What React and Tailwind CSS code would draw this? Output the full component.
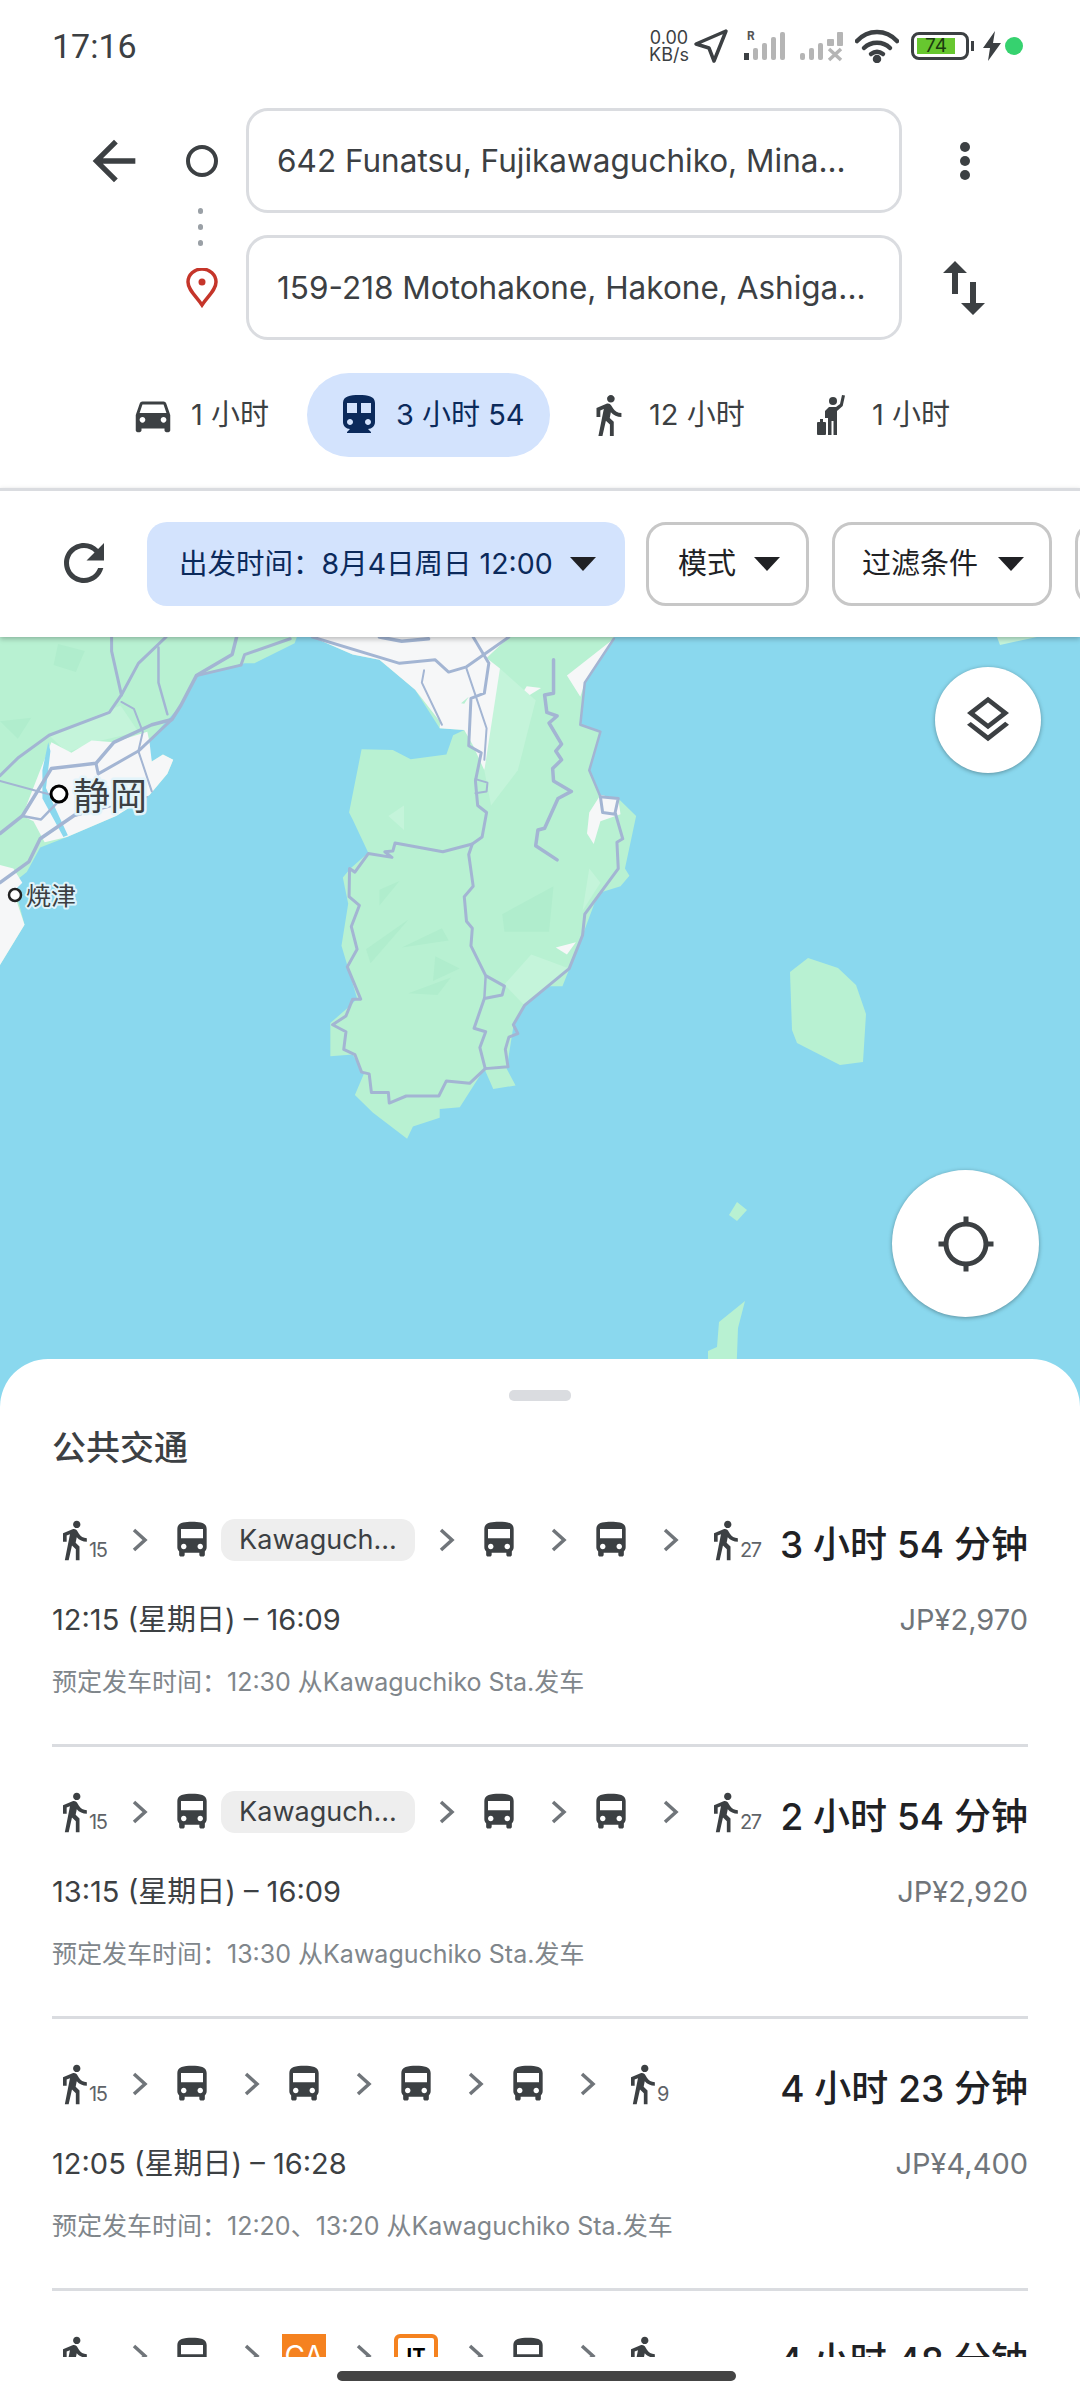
const WALK = 'M13.5 5.5c1.1 0 2-.9 2-2s-.9-2-2-2-2 .9-2 2 .9 2 2 2zM9.8 8.9L7 23h2.1l1.8-8 2.1 2v6h2v-7.5l-2.1-2 .6-3C14.8 12 16.8 13 19 13v-2c-1.9 0-3.5-1-4.3-2.4l-1-1.6c-.4-.6-1-1-1.7-1-.3 0-.5.1-.8.1L6 8.3V13h2V9.6l1.8-.7'
const BUS = 'M4 16c0 .88.39 1.67 1 2.22V20c0 .55.45 1 1 1h1c.55 0 1-.45 1-1v-1h8v1c0 .55.45 1 1 1h1c.55 0 1-.45 1-1v-1.78c.61-.55 1-1.34 1-2.22V6c0-3.5-3.58-4-8-4s-8 .5-8 4v10zm3.5 1c-.83 0-1.5-.67-1.5-1.5S6.67 14 7.5 14s1.5.67 1.5 1.5S8.33 17 7.5 17zm9 0c-.83 0-1.5-.67-1.5-1.5s.67-1.5 1.5-1.5 1.5.67 1.5 1.5-.67 1.5-1.5 1.5zm1.5-6H6V6h12v5z'
const CAR = 'M18.92 6.01C18.72 5.42 18.16 5 17.5 5h-11c-.66 0-1.21.42-1.42 1.01L3 12v8c0 .55.45 1 1 1h1c.55 0 1-.45 1-1v-1h12v1c0 .55.45 1 1 1h1c.55 0 1-.45 1-1v-8l-2.08-5.99zM6.5 16c-.83 0-1.5-.67-1.5-1.5S5.67 13 6.5 13s1.5.67 1.5 1.5S7.33 16 6.5 16zm11 0c-.83 0-1.5-.67-1.5-1.5s.67-1.5 1.5-1.5 1.5.67 1.5 1.5-.67 1.5-1.5 1.5zM5 11l1.5-4.5h11L19 11H5z'
const TRAIN = 'M12 2c-4.42 0-8 .5-8 4v9.5C4 17.43 5.57 19 7.5 19L6 20.5v.5h12v-.5L16.5 19c1.93 0 3.5-1.57 3.5-3.5V6c0-3.5-3.58-4-8-4zM7.5 17c-.83 0-1.5-.67-1.5-1.5S6.67 14 7.5 14s1.5.67 1.5 1.5S8.33 17 7.5 17zm3.5-6H6V6h5v5zm5.5 6c-.83 0-1.5-.67-1.5-1.5s.67-1.5 1.5-1.5 1.5.67 1.5 1.5-.67 1.5-1.5 1.5zM18 11h-5V6h5v5z'
const REFRESH = 'M17.65 6.35C16.2 4.9 14.21 4 12 4c-4.42 0-7.99 3.58-7.99 8s3.57 8 7.99 8c3.73 0 6.84-2.55 7.73-6h-2.08c-.82 2.33-3.04 4-5.65 4-3.31 0-6-2.69-6-6s2.69-6 6-6c1.66 0 3.14.69 4.22 1.78L13 11h7V4l-2.35 2.35z'
const LAYERS = 'M11.99 18.54l-7.37-5.73L3 14.07l9 7 9-7-1.63-1.27-7.38 5.74zM12 16l7.36-5.73L21 9l-9-7-9 7 1.63 1.27L12 16zm0-11.47L17.74 9 12 13.47 6.26 9 12 4.53z'
const LOCATE = 'M20.94 11c-.46-4.17-3.77-7.48-7.94-7.94V1h-2v2.06C6.83 3.52 3.52 6.83 3.06 11H1v2h2.06c.46 4.17 3.77 7.48 7.94 7.94V23h2v-2.06c4.17-.46 7.48-3.77 7.94-7.94H23v-2h-2.06zM12 19c-3.87 0-7-3.13-7-7s3.13-7 7-7 7 3.13 7 7-3.13 7-7 7z'
const SWAP = 'M16 17.01V10h-2v7.01h-3L15 21l4-3.99h-3zM9 3L5 6.99h3V14h2V6.99h3L9 3z'
const BACK = 'M20 11H7.83l5.59-5.59L12 4l-8 8 8 8 1.41-1.41L7.83 13H20v-2z'

function Icon({ d, className }) {
  return (
    <svg viewBox="0 0 24 24" className={className} fill="currentColor">
      <path d={d} />
    </svg>
  )
}

function HailIcon() {
  return (
    <svg viewBox="0 0 32 42" className="w-[32px] h-[42px] text-[#3c4043]" fill="currentColor">
      <circle cx="17" cy="7" r="4" />
      <path d="M13 13h7l4-3 2-9 3 .6-2.300 10.400-5.700 5V41h-3.500V27h-2v14H12V24l-3 0V17z" />
      <rect x="1" y="28" width="9" height="13" rx="1" />
      <rect x="4" y="25" width="3" height="3" />
    </svg>
  )
}

function Chevron() {
  return (
    <svg viewBox="0 0 44 44" className="w-[44px] h-[44px] shrink-0" fill="none" stroke="#70757a" strokeWidth="3.500">
      <path d="M16 12l11 10-11 10" />
    </svg>
  )
}

function Bus() {
  return <Icon d={BUS} className="w-[44px] h-[44px] shrink-0 text-[#3c4043]" />
}

function Walk({ minutes }) {
  return (
    <div className="flex items-end shrink-0">
      <Icon d={WALK} className="w-[44px] h-[44px] text-[#3c4043]" />
      <span className="-ml-[7px] w-[19px] text-[20px] leading-[24px] tracking-[-1.5px] text-[#5f6368]">{minutes}</span>
    </div>
  )
}

function RouteIcons({ steps }) {
  return (
    <div className="flex items-center">
      {steps.map((s, i) => {
        const prev = steps[i - 1]
        const wide = prev && prev.type !== 'walk' && !prev.label
        return (
          <div key={i} className="flex items-center">
            {i > 0 && <div className={wide ? 'ml-[16px]' : 'ml-[10px]'}><Chevron /></div>}
            {s.type === 'walk' && <div className="ml-[10px]"><Walk minutes={s.min} /></div>}
            {s.type === 'bus' && <div className="ml-[8px] flex items-center">
              <Bus />
              {s.label && (
                <span className="ml-[7px] w-[194px] h-[42px] rounded-[14px] bg-[#eeeeee] text-[#3c4043] text-[27px] leading-[42px] text-center">{s.label}</span>
              )}
            </div>}
            {s.type === 'ca' && <div className="ml-[8px] w-[44px] h-[44px] bg-[#f58220] text-white text-[28px] leading-[44px] text-center">CA</div>}
            {s.type === 'it' && <div className="ml-[8px] w-[44px] h-[44px] rounded-t-[6px] border-[4px] border-[#f58220] bg-white text-black text-[20px] leading-[36px] text-center font-bold">IT</div>}
          </div>
        )
      })}
    </div>
  )
}

const routes = [
  {
    steps: [{ type: 'walk', min: 15 }, { type: 'bus', label: 'Kawaguch...' }, { type: 'bus' }, { type: 'bus' }, { type: 'walk', min: 27 }],
    duration: '3 小时 54 分钟', times: '12:15 (星期日) – 16:09', price: 'JP¥2,970',
    note: '预定发车时间：12:30 从Kawaguchiko Sta.发车',
  },
  {
    steps: [{ type: 'walk', min: 15 }, { type: 'bus', label: 'Kawaguch...' }, { type: 'bus' }, { type: 'bus' }, { type: 'walk', min: 27 }],
    duration: '2 小时 54 分钟', times: '13:15 (星期日) – 16:09', price: 'JP¥2,920',
    note: '预定发车时间：13:30 从Kawaguchiko Sta.发车',
  },
  {
    steps: [{ type: 'walk', min: 15 }, { type: 'bus' }, { type: 'bus' }, { type: 'bus' }, { type: 'bus' }, { type: 'walk', min: 9 }],
    duration: '4 小时 23 分钟', times: '12:05 (星期日) – 16:28', price: 'JP¥4,400',
    note: '预定发车时间：12:20、13:20 从Kawaguchiko Sta.发车',
  },
  {
    steps: [{ type: 'walk', min: 15 }, { type: 'bus' }, { type: 'ca' }, { type: 'it' }, { type: 'bus' }, { type: 'walk', min: 9 }],
    duration: '4 小时 48 分钟', times: '12:05 (星期日) – 16:53', price: 'JP¥4,400',
    note: '预定发车时间：12:20 从Kawaguchiko Sta.发车',
  },
]

function RouteRow({ route, last }) {
  return (
    <div className={`mx-[52px] h-[272px] pt-[42px] ${last ? '' : 'border-b-[3px] border-[#dadce0]'}`}>
      <div className="h-[46px] flex items-center justify-between -ml-[10px]">
        <RouteIcons steps={route.steps} />
        <span className="pt-[10px] text-[37px] leading-[46px] font-medium text-[#202124] whitespace-nowrap">{route.duration}</span>
      </div>
      <div className="mt-[37px] h-[40px] flex items-center justify-between text-[29px]">
        <span className="text-[#3c4043]">{route.times}</span>
        <span className="text-[#70757a]">{route.price}</span>
      </div>
      <div className="mt-[26px] h-[34px] flex items-center text-[25px] text-[#80868b]">{route.note}</div>
    </div>
  )
}

function StatusBar() {
  return (
    <div className="h-[92px] flex items-center pl-[52px] text-[#3c4043]">
      <span className="font-['Roboto',sans-serif] text-[34px] leading-none">17:16</span>
      <div className="ml-auto flex items-center pr-[57px]">
        <div className="w-[44px] text-[18px] leading-[17px] text-center">0.00<br />KB/s</div>
        <svg viewBox="0 0 36 36" className="ml-[2px] w-[36px] h-[36px]" fill="none" stroke="#3c4043" strokeWidth="3.500" strokeLinejoin="round">
          <path d="M33 3L3 16l13 4 5 13z" />
        </svg>
        <svg viewBox="0 0 46 34" className="ml-[14px] w-[46px] h-[34px]" fill="#b5b5b5">
          <text x="4" y="11" fontSize="12" fontWeight="700" fill="#555" fontFamily="Roboto, sans-serif">R</text>
          <rect x="1" y="24" width="5" height="7" fill="#3c4043" />
          <rect x="10" y="19" width="5" height="12" rx="2" />
          <rect x="19" y="14" width="5" height="17" rx="2" />
          <rect x="28" y="8" width="5" height="23" rx="2" />
          <rect x="37" y="3" width="5" height="28" rx="2" />
        </svg>
        <svg viewBox="0 0 46 34" className="ml-[10px] w-[46px] h-[34px]" fill="#b5b5b5">
          <rect x="1" y="24" width="5" height="7" rx="2" />
          <rect x="10" y="19" width="5" height="12" rx="2" />
          <rect x="19" y="14" width="5" height="17" rx="2" />
          <rect x="28" y="10" width="7" height="7" rx="1" />
          <rect x="38" y="3" width="6" height="14" rx="1" />
          <path d="M30 20l12 11M42 20L30 31" stroke="#b5b5b5" strokeWidth="3.500" fill="none" />
        </svg>
        <svg viewBox="0 0 44 34" className="ml-[10px] w-[44px] h-[34px]" fill="none" stroke="#3c4043" strokeWidth="4.500" strokeLinecap="round">
          <path d="M2 12C13 0 31 0 42 12" />
          <path d="M9 19c7-7 19-7 26 0" />
          <path d="M16 25c4-3 8-3 12 0" />
          <circle cx="22" cy="30" r="2" fill="#3c4043" />
        </svg>
        <div className="ml-[12px] flex items-center">
          <div className="w-[58px] h-[28px] rounded-[8px] border-[3px] border-[#3c4043] p-[3px]">
            <div className="w-[38px] h-full bg-[#67c72f] text-[19px] leading-[16px] text-center text-[#1b3a10]">74</div>
          </div>
          <div className="ml-[2px] w-[3px] h-[10px] bg-[#3c4043]" />
        </div>
        <svg viewBox="0 0 18 30" className="ml-[9px] w-[18px] h-[30px]" fill="#3c4043">
          <path d="M12 0L0 17h7L5 30 18 12h-8z" />
        </svg>
        <div className="ml-[4px] w-[18px] h-[18px] rounded-full bg-[#36d26f]" />
      </div>
    </div>
  )
}

function SearchBox({ text }) {
  return (
    <div className="h-[105px] rounded-[22px] border-[3px] border-[#dadce0] pl-[28px] flex items-center text-[31.500px] text-[#3c4043] whitespace-nowrap">
      {text}
    </div>
  )
}

function Directions() {
  return (
    <div className="pt-[16px] grid grid-cols-[246px_656px_178px]">
      <div className="row-span-2 h-[232px] relative text-[#3c4043]">
        <div className="absolute left-[82px] top-[21px]"><Icon d={BACK} className="w-[64px] h-[64px]" /></div>
        <div className="absolute left-[186px] top-[37px] w-[32px] h-[32px] rounded-full border-[4px] border-[#3c4043]" />
        <div className="absolute left-[198px] top-[100px] flex flex-col gap-[10px]">
          <div className="w-[5px] h-[6px] rounded-full bg-[#9aa0a6]" />
          <div className="w-[5px] h-[6px] rounded-full bg-[#9aa0a6]" />
          <div className="w-[5px] h-[6px] rounded-full bg-[#9aa0a6]" />
        </div>
        <svg viewBox="0 0 32 40" className="absolute left-[186px] top-[160px] w-[32px] h-[40px]" fill="none" stroke="#c5352a" strokeWidth="3.500">
          <path d="M16 37C10 28 2 22 2 14a14 13 0 0 1 28 0c0 8-8 14-14 23z" />
          <circle cx="16" cy="14" r="3.500" fill="#c5352a" stroke="none" />
        </svg>
      </div>
      <SearchBox text="642 Funatsu, Fujikawaguchiko, Mina..." />
      <div className="flex justify-start pl-[58px] items-center">
        <div className="flex flex-col gap-[4px]">
          <div className="w-[10px] h-[10px] rounded-full bg-[#3c4043]" />
          <div className="w-[10px] h-[10px] rounded-full bg-[#3c4043]" />
          <div className="w-[10px] h-[10px] rounded-full bg-[#3c4043]" />
        </div>
      </div>
      <div className="mt-[22px] col-start-2"><SearchBox text="159-218 Motohakone, Hakone, Ashiga..." /></div>
      <div className="mt-[22px] flex items-center pl-[26px] text-[#3c4043]">
        <Icon d={SWAP} className="w-[72px] h-[72px]" />
      </div>
    </div>
  )
}

function ModeTabs() {
  return (
    <div className="mt-[33px] h-[84px] flex items-center text-[29px] text-[#3c4043]">
      <div className="ml-[130px] w-[140px] shrink-0 flex items-center">
        <Icon d={CAR} className="w-[46px] h-[46px]" />
        <span className="ml-[15px]">1 小时</span>
      </div>
      <div className="ml-[37px] h-[84px] w-[243px] shrink-0 rounded-[42px] bg-[#d3e3fd] text-[#0b2a5b] flex items-center pl-[28px]">
        <Icon d={TRAIN} className="w-[48px] h-[48px]" />
        <span className="ml-[13px] whitespace-nowrap">3 小时 54</span>
      </div>
      <div className="ml-[35px] w-[200px] shrink-0 flex items-center">
        <Icon d={WALK} className="w-[46px] h-[46px]" />
        <span className="ml-[18px]">12 小时</span>
      </div>
      <div className="ml-[31px] flex items-center">
        <HailIcon />
        <span className="ml-[24px]">1 小时</span>
      </div>
    </div>
  )
}

function Caret({ color }) {
  return (
    <svg viewBox="0 0 26 14" className="w-[26px] h-[14px] shrink-0" fill={color}>
      <path d="M0 0h26L13 14z" />
    </svg>
  )
}

function FilterBar() {
  return (
    <div className="relative z-10 h-[149px] pt-[31px] bg-white shadow-[0_2px_5px_rgba(0,0,0,0.25)] border-t-[3px] border-[#dadce0] mt-[31px] flex items-start overflow-hidden">
      <Icon d={REFRESH} className="ml-[52px] mt-[11px] w-[64px] h-[60px] shrink-0 text-[#3c4043]" />
      <div className="ml-[31px] h-[84px] w-[478px] shrink-0 rounded-[20px] bg-[#d3e3fd] text-[#0b2a5b] text-[28.500px] flex items-center pl-[32px] whitespace-nowrap">
        出发时间：8月4日周日 12:00
        <span className="ml-auto mr-[29px]"><Caret color="#202124" /></span>
      </div>
      <div className="ml-[21px] h-[84px] w-[163px] shrink-0 rounded-[20px] border-[3px] border-[#c7c7c7] text-[#202124] text-[29px] flex items-center pl-[29px]">
        模式
        <span className="ml-auto mr-[26px]"><Caret color="#202124" /></span>
      </div>
      <div className="ml-[23px] h-[84px] w-[220px] shrink-0 rounded-[20px] border-[3px] border-[#c7c7c7] text-[#202124] text-[29px] flex items-center pl-[27px]">
        过滤条件
        <span className="ml-auto mr-[25px]"><Caret color="#202124" /></span>
      </div>
      <div className="ml-[23px] h-[84px] w-[100px] shrink-0 rounded-[20px] border-[3px] border-[#c7c7c7]" />
    </div>
  )
}

const ROAD = '#a3b5d3'
const roads = [
  ['250,20 250,60 272,185 245,235 110,300 40,365 0,415', 3],
  ['372,20 310,95 272,185', 3],
  ['355,50 355,150 375,240', 2.500],
  ['530,20 520,70 440,130 405,215 385,255 340,270 255,320 215,380 115,395 50,530 0,580', 3.500],
  ['650,25 548,70 540,100 440,130', 3],
  ['385,255 310,345 220,410 215,380', 3],
  ['272,205 300,225 320,290 310,345 340,460', 2],
  ['0,430 130,475', 2],
  ['130,490 92,540 50,530', 2.500],
  ['170,525 90,595 65,660 0,720', 3.500],
  ['170,530 330,475', 1.500],
  ['700,20 895,95 975,85 1005,120 1045,105 1140,20', 3],
  ['850,20 900,32 960,25', 3.500],
  ['950,115 945,150 990,270', 2],
  ['1045,110 1090,280 1085,370', 2],
  ['1060,20 1095,95 1085,180 1055,195 1050,330 1078,350 1065,430 1070,500 1090,520 1080,590 1058,610 1050,640 1060,730 1040,760 1045,830 1058,850 1055,900 1088,985 1130,1015 1125,1040 1085,1050 1062,1135 1088,1145 1075,1190 1087,1250 1138,1245 1132,1195 1140,1160 1160,1150 1150,1125 1175,1070 1275,965 1305,870 1310,810 1385,680 1382,605 1395,595 1378,520 1385,480 1345,475 1350,520 1378,525', 3],
  ['1088,985 1085,1050', 2.500],
  ['1345,475 1320,400 1345,290 1300,270 1310,150 1375,25', 2.500],
  ['1240,85 1240,180 1220,185 1225,235 1248,245 1230,265 1258,325 1245,345 1258,370 1238,395 1240,430 1280,460 1250,480 1220,565 1205,570 1200,615 1248,655', 3.500],
  ['1058,610 992,632 885,607 880,630 862,632 878,648 825,637 795,690 783,680 782,760 805,785 787,845 800,910 778,960 808,1052 790,1052 775,1100 745,1125 775,1145 770,1195 795,1210 810,1260 827,1265 832,1318 870,1318 872,1348 910,1328 983,1328 1000,1285 1052,1292 1087,1250', 3],
  ['1065,425 1092,435 1090,460 1065,465', 2],
]

function MapDrawing() {
  return (
    <svg viewBox="0 637 1080 772" className="block w-full h-full">
      <rect x="0" y="637" width="1080" height="772" fill="#8ad8ee" />
      <g transform="translate(0 630) scale(0.4464 0.3509)">
        <polygon fill="#b8f1d2" points="0,20 665,20 660,38 570,95 548,95 440,130 405,215 330,320 340,375 365,355 388,370 375,410 335,470 260,530 150,590 90,620 60,690 30,720 55,840 0,955" />
        <polygon fill="#c4f4da" points="110,300 270,215 310,290 210,320 150,350" />
        <polygon fill="#b0edcd" points="130,40 190,60 170,120 120,100" />
        <polygon fill="#b0edcd" points="0,260 70,250 40,310" />
        <polygon fill="#f6f7f8" points="115,320 160,350 205,315 255,320 330,290 335,320 340,375 365,355 388,370 375,410 335,470 260,530 150,590 100,605 75,545 50,530 90,400" />
        <polygon fill="#f6f7f8" points="0,670 30,680 50,720 30,745 55,840 0,955" />
        <polygon fill="#8ad8ee" points="95,400 108,320 113,345 103,450 152,585 142,590 95,480" />
        <polygon fill="#b8f1d2" points="700,20 1375,20 1375,30 1310,150 1300,270 1345,290 1320,400 1345,470 1385,480 1425,530 1400,680 1410,700 1390,730 1340,750 1305,870 1260,1015 1230,1015 1175,1070 1150,1130 1135,1250 1155,1298 1105,1308 1085,1250 1030,1360 985,1365 985,1390 925,1415 912,1450 835,1375 795,1325 815,1265 790,1210 740,1215 740,1120 785,1070 800,1050 765,900 780,780 768,705 785,680 825,635 790,540 782,520 810,340 880,342 920,368 1000,355 1015,300 1040,285 985,280 930,170 850,85 790,70" />
        <polygon fill="#f6f7f8" points="700,20 1140,20 1090,80 1120,110 1130,200 1085,400 1060,330 1040,285 985,280 990,200 1040,210 1050,190 985,260 930,170 850,85 790,70" />
        <polygon fill="#f6f7f8" points="1375,25 1310,150 1300,190 1270,130" />
        <polygon fill="#f6f7f8" points="1155,210 1180,160 1212,165" />
        <polygon fill="#f6f7f8" points="1345,470 1385,480 1390,525 1345,545 1330,610 1315,580 1320,520" />
        <polygon fill="#f6f7f8" points="1245,905 1290,890 1270,925" />
        <polygon fill="#c4f4da" points="1120,110 1200,200 1160,400 1100,500 1085,400" />
        <polygon fill="#c4f4da" points="1190,925 1275,965 1175,1070 1130,1010" />
        <polygon fill="#b0edcd" points="850,740 895,715 850,785" />
        <polygon fill="#b0edcd" points="820,910 915,825 830,950" />
        <polygon fill="#b0edcd" points="900,905 990,850 1005,885" />
        <polygon fill="#b0edcd" points="975,930 1030,965 970,1000" />
        <polygon fill="#b0edcd" points="915,1035 1010,990 980,1040" />
        <polygon fill="#b0edcd" points="1125,810 1240,730 1230,860 1130,860" />
        <polygon fill="#c4f4da" points="870,530 905,500 905,570" />
        <polygon fill="#c4f4da" points="1320,680 1345,720 1305,800" />
      </g>
      <polygon fill="#b8f1d2" points="790,972 808,958 838,968 856,985 866,1014 863,1062 840,1065 797,1043 792,1030" />
      <polygon fill="#b8f1d2" points="729,1215 737,1202 747,1210 737,1221" />
      <polygon fill="#b8f1d2" points="745,1301 719,1322 717,1347 708,1351 708,1409 735,1409 738,1328" />
      <polygon fill="#c4f4da" points="997,637 1037,637 1000,645" />
      <g transform="translate(0 630) scale(0.4464 0.3509)" fill="none" strokeLinejoin="round" strokeLinecap="round">
        {roads.map(([p, w], i) => (
          <polyline key={i} points={p} stroke={ROAD} strokeWidth={w} vectorEffect="non-scaling-stroke" />
        ))}
      </g>
      <circle cx="59" cy="794" r="8" fill="#fff" stroke="#000" strokeWidth="3" />
      <text x="73" y="810" fontSize="37" fill="#3c4043" stroke="#e3f4fa" strokeWidth="5" paintOrder="stroke" strokeLinejoin="round" fontFamily="'Noto Sans CJK JP', sans-serif">静岡</text>
      <circle cx="15" cy="895" r="6" fill="#fff" stroke="#222" strokeWidth="2.500" />
      <text x="26" y="905" fontSize="25" fill="#3c4043" stroke="#dff3fa" strokeWidth="4" paintOrder="stroke" strokeLinejoin="round" fontFamily="'Noto Sans CJK JP', sans-serif">焼津</text>
    </svg>
  )
}

function MapArea() {
  return (
    <div className="relative h-[772px]">
      <MapDrawing />
      <button className="absolute left-[935px] top-[30px] w-[106px] h-[106px] rounded-full bg-white shadow-[0_1px_4px_rgba(0,0,0,0.35)] flex items-center justify-center text-[#3c4043]">
        <Icon d={LAYERS} className="w-[56px] h-[56px]" />
      </button>
      <button className="absolute left-[892px] top-[533px] w-[147px] h-[147px] rounded-full bg-white shadow-[0_1px_4px_rgba(0,0,0,0.35)] flex items-center justify-center text-[#3c4043]">
        <Icon d={LOCATE} className="w-[60px] h-[60px]" />
      </button>
    </div>
  )
}

function ResultsSheet() {
  return (
    <div className="relative z-10 -mt-[50px] h-[1041px] bg-white rounded-t-[48px] pt-[31px]">
      <div className="mx-auto w-[62px] h-[11px] rounded-[5px] bg-[#dadce0]" />
      <div className="h-[74px] pt-[18px] pl-[52px] flex items-center text-[34px] font-medium text-[#3c4043]">公共交通</div>
      <div className="h-[882px] overflow-hidden">
        {routes.map((r, i) => <RouteRow key={i} route={r} last={i === routes.length - 1} />)}
      </div>
      <div className="pt-[14px]">
        <div className="ml-[337px] w-[399px] h-[10px] rounded-full bg-[#444444]" />
      </div>
    </div>
  )
}

export default function App() {
  return (
    <div className="w-[1080px] h-[2400px] overflow-hidden bg-white font-['Inter','Noto_Sans_CJK_SC',sans-serif]">
      <StatusBar />
      <Directions />
      <ModeTabs />
      <FilterBar />
      <MapArea />
      <ResultsSheet />
    </div>
  )
}
